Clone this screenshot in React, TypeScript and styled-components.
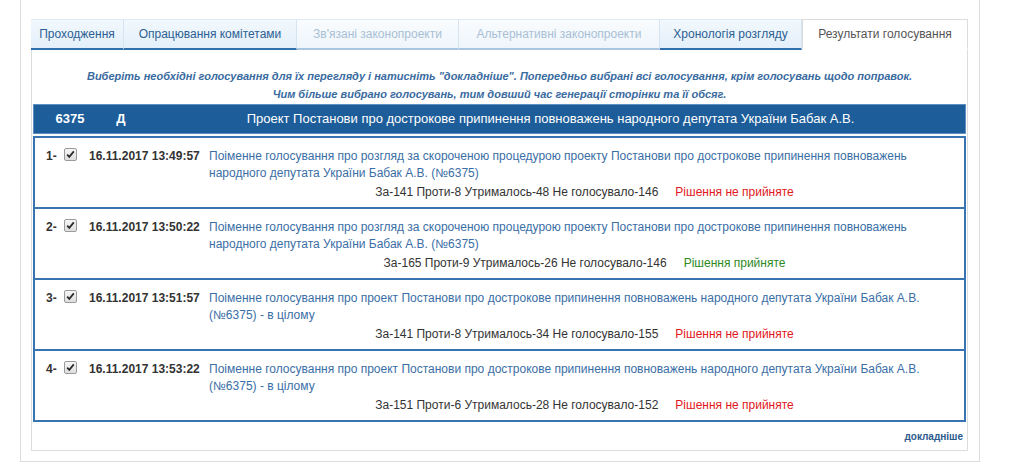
import React from 'react';
import styled, { createGlobalStyle, css } from 'styled-components';

const GlobalStyle = createGlobalStyle`
  body {
    margin: 0;
    background: #fff;
    font-family: 'Liberation Sans', Arial, sans-serif;
    color: #333;
  }
`;

const Frame = styled.div`
  box-sizing: border-box;
  width: 960px;
  margin-left: 20px;
  padding: 19px 11px 10px 10px;
  border: 1px solid #dcdcdc;
  border-top: none;
  background: #fff;
`;

const TabStrip = styled.div`
  display: flex;
`;

type TabState = 'normal' | 'disabled' | 'active';

const Tab = styled.div<{ $w: number; $state: TabState }>`
  box-sizing: border-box;
  flex: none;
  width: ${(p) => p.$w}px;
  height: 31px;
  line-height: 28px;
  text-align: center;
  font-size: 12px;
  white-space: nowrap;
  border-top: 1px solid #e2ecf5;
  border-right: 1px solid #d6e4f1;
  ${(p) =>
    p.$state === 'normal' &&
    css`
      background: linear-gradient(#f2f8fd, #e3effa);
      color: #2c5f93;
      border-bottom: 2px solid #2f6fab;
    `}
  ${(p) =>
    p.$state === 'disabled' &&
    css`
      background: linear-gradient(#f9fcfe, #eef5fb);
      color: #a9bfd5;
      border-bottom: 2px solid #a9c5df;
    `}
  ${(p) =>
    p.$state === 'active' &&
    css`
      background: #fff;
      color: #555;
      border: 1px solid #dcdcdc;
      border-bottom: 2px solid #fff;
    `}
`;

const Panel = styled.div`
  box-sizing: border-box;
  width: 937px;
  border: 1px solid #dcdcdc;
  border-top: none;
  padding: 17px 1px 6px 1px;
`;

const Info = styled.div`
  text-align: center;
  font-size: 11px;
  line-height: 18px;
  font-weight: bold;
  font-style: italic;
  color: #3a6b9f;
  margin-bottom: 1px;
`;

const HeadBar = styled.div`
  display: grid;
  grid-template-columns: 72px 30px 1fr;
  height: 30px;
  box-sizing: border-box;
  border: 1px solid #5d8fc2;
  background: #1d5d9a;
  color: #fff;
  font-size: 13px;
  line-height: 28px;
  margin-bottom: 2px;
`;

const HeadCell = styled.div<{ $bold?: boolean }>`
  text-align: center;
  font-weight: ${(p) => (p.$bold ? 'bold' : 'normal')};
  white-space: nowrap;
`;

const VoteRow = styled.div`
  display: grid;
  grid-template-columns: 18px 25px 120px 1fr;
  border: 2px solid #3874b2;
  border-bottom: none;
  padding: 10px 4px 6px 11px;
  font-size: 12px;
  line-height: 17px;
  &:last-child {
    border-bottom: 2px solid #3874b2;
  }
`;

const Num = styled.div`
  font-weight: bold;
  color: #333;
`;

const Check = styled.span`
  display: block;
  box-sizing: border-box;
  width: 13px;
  height: 13px;
  margin-top: 0;
  border: 1px solid #9a9a9a;
  border-radius: 2px;
  background: linear-gradient(#f6f6f6, #dedede);
  svg {
    display: block;
  }
`;

const Stamp = styled.div`
  font-weight: bold;
  color: #333;
  white-space: nowrap;
`;

const Body = styled.div``;

const Title = styled.div`
  color: #3a6ea6;
`;

const Tally = styled.div`
  margin-top: 1px;
  text-align: center;
  line-height: 18px;
  color: #333;
`;

const Verdict = styled.span<{ $ok: boolean }>`
  margin-left: 17px;
  color: ${(p) => (p.$ok ? '#2e8a1e' : '#e2171d')};
`;

const Footer = styled.div`
  text-align: right;
  padding: 8px 3px 0 0;
  font-size: 10px;
  line-height: 14px;
  font-weight: bold;
  color: #2c5a8c;
`;

const tabs: { label: string; w: number; state: TabState }[] = [
  { label: 'Проходження', w: 93, state: 'normal' },
  { label: 'Опрацювання комітетами', w: 173, state: 'normal' },
  { label: "Зв'язані законопроекти", w: 162, state: 'disabled' },
  { label: 'Альтернативні законопроекти', w: 201, state: 'disabled' },
  { label: 'Хронологія розгляду', w: 142, state: 'normal' },
  { label: 'Результати голосування', w: 166, state: 'active' },
];

const votes = [
  {
    time: '16.11.2017 13:49:57',
    title:
      'Поіменне голосування про розгляд за скороченою процедурою проекту Постанови про дострокове припинення повноважень народного депутата України Бабак А.В. (№6375)',
    tally: 'За-141 Проти-8 Утрималось-48 Не голосувало-146',
    ok: false,
  },
  {
    time: '16.11.2017 13:50:22',
    title:
      'Поіменне голосування про розгляд за скороченою процедурою проекту Постанови про дострокове припинення повноважень народного депутата України Бабак А.В. (№6375)',
    tally: 'За-165 Проти-9 Утрималось-26 Не голосувало-146',
    ok: true,
  },
  {
    time: '16.11.2017 13:51:57',
    title:
      'Поіменне голосування про проект Постанови про дострокове припинення повноважень народного депутата України Бабак А.В. (№6375) - в цілому',
    tally: 'За-141 Проти-8 Утрималось-34 Не голосувало-155',
    ok: false,
  },
  {
    time: '16.11.2017 13:53:22',
    title:
      'Поіменне голосування про проект Постанови про дострокове припинення повноважень народного депутата України Бабак А.В. (№6375) - в цілому',
    tally: 'За-151 Проти-6 Утрималось-28 Не голосувало-152',
    ok: false,
  },
];

const CheckMark = () => (
  <Check>
    <svg width="11" height="11" viewBox="0 0 11 11">
      <path d="M2.2 5.6 L4.3 7.8 L8.8 2.4" fill="none" stroke="#2b2b2b" strokeWidth="1.8" />
    </svg>
  </Check>
);

export default function App() {
  return (
    <>
      <GlobalStyle />
      <Frame>
        <TabStrip>
          {tabs.map((t) => (
            <Tab key={t.label} $w={t.w} $state={t.state}>
              {t.label}
            </Tab>
          ))}
        </TabStrip>
        <Panel>
          <Info>
            Виберіть необхідні голосування для їх перегляду і натисніть "докладніше". Попередньо вибрані всі
            голосування, крім голосувань щодо поправок.
            <br />
            Чим більше вибрано голосувань, тим довший час генерації сторінки та її обсяг.
          </Info>
          <HeadBar>
            <HeadCell $bold>6375</HeadCell>
            <HeadCell $bold>Д</HeadCell>
            <HeadCell>
              Проект Постанови про дострокове припинення повноважень народного депутата України Бабак А.В.
            </HeadCell>
          </HeadBar>
          <div>
            {votes.map((v, i) => (
              <VoteRow key={v.time}>
                <Num>{i + 1}-</Num>
                <div>
                  <CheckMark />
                </div>
                <Stamp>{v.time}</Stamp>
                <Body>
                  <Title>{v.title}</Title>
                  <Tally>
                    {v.tally}
                    <Verdict $ok={v.ok}>{v.ok ? 'Рішення прийняте' : 'Рішення не прийняте'}</Verdict>
                  </Tally>
                </Body>
              </VoteRow>
            ))}
          </div>
          <Footer>докладніше</Footer>
        </Panel>
      </Frame>
    </>
  );
}
